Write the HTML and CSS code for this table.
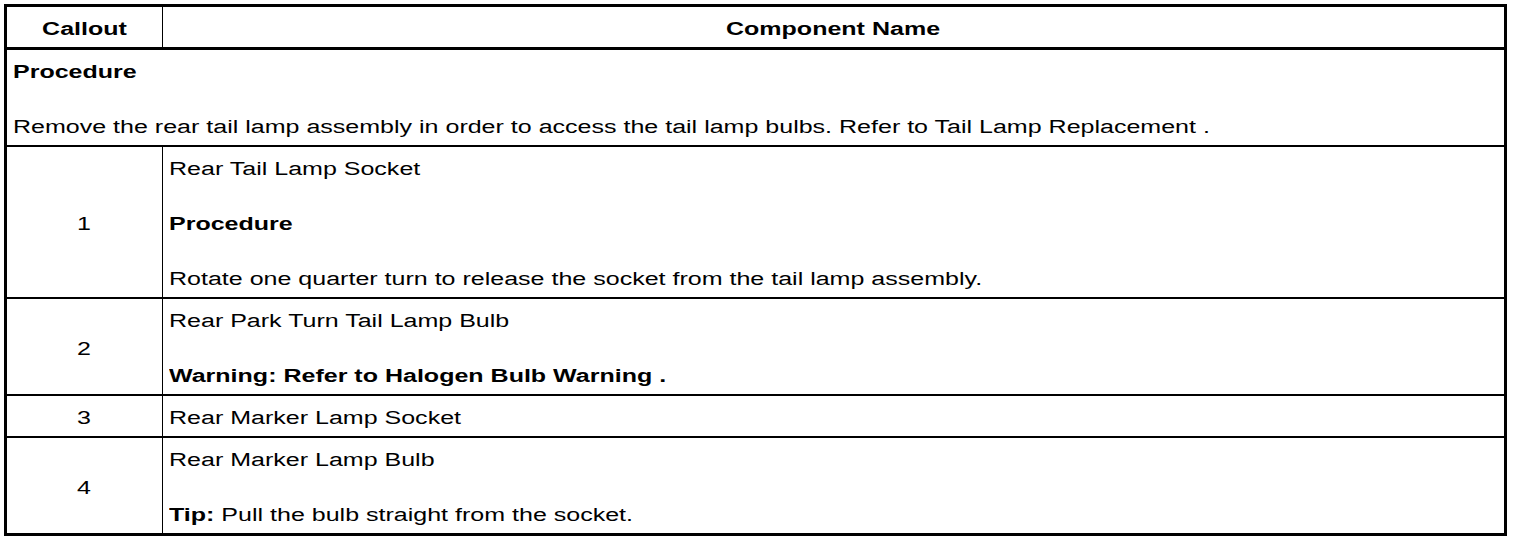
FILE: index.html
```html
<!DOCTYPE html>
<html lang="en">
<head>
<meta charset="utf-8">
<title>Callout table</title>
<link rel="stylesheet" href="styles.css">
</head>
<body>
<table class="parts">
  <thead>
    <tr>
      <th class="col-callout"><span class="sx c">Callout</span></th>
      <th class="col-name"><span class="sx c">Component Name</span></th>
    </tr>
  </thead>
  <tbody>
    <tr class="first">
      <td colspan="2" class="name">
        <p><span class="sx"><b>Procedure</b></span></p>
        <p><span class="sx">Remove the rear tail lamp assembly in order to access the tail lamp bulbs. Refer to Tail Lamp Replacement .</span></p>
      </td>
    </tr>
    <tr>
      <td class="num"><span class="sx c">1</span></td>
      <td class="name">
        <p><span class="sx">Rear Tail Lamp Socket</span></p>
        <p><span class="sx"><b>Procedure</b></span></p>
        <p><span class="sx">Rotate one quarter turn to release the socket from the tail lamp assembly.</span></p>
      </td>
    </tr>
    <tr>
      <td class="num"><span class="sx c">2</span></td>
      <td class="name">
        <p><span class="sx">Rear Park Turn Tail Lamp Bulb</span></p>
        <p><span class="sx"><b>Warning: Refer to Halogen Bulb Warning .</b></span></p>
      </td>
    </tr>
    <tr>
      <td class="num"><span class="sx c">3</span></td>
      <td class="name">
        <p><span class="sx">Rear Marker Lamp Socket</span></p>
      </td>
    </tr>
    <tr>
      <td class="num"><span class="sx c">4</span></td>
      <td class="name">
        <p><span class="sx">Rear Marker Lamp Bulb</span></p>
        <p><span class="sx"><b>Tip:</b> Pull the bulb straight from the socket.</span></p>
      </td>
    </tr>
  </tbody>
</table>
</body>
</html>
```
FILE: styles.css
```css
html, body {
  margin: 0;
  padding: 0;
  background: #ffffff;
}

body {
  font-family: "Liberation Sans", Arial, sans-serif;
  font-size: 18px;
  line-height: 22px;
  color: #000000;
}

.parts {
  margin: 4px;
  width: 1503px;
  border: 3px solid #000;
  border-collapse: separate;
  border-spacing: 0;
  table-layout: fixed;
}

.parts th,
.parts td {
  box-sizing: border-box;
  padding: 11px 6px 7px 6px;
  vertical-align: middle;
  text-align: left;
}

.parts th {
  font-weight: bold;
  text-align: center;
  border-bottom: 3px solid #000;
}

.parts th.col-callout {
  width: 156px;
  border-right: 1px solid #000;
}

.parts tbody tr + tr td {
  border-top: 2px solid #000;
}

.parts td.num {
  text-align: center;
  border-right: 1px solid #000;
}

.name p {
  margin: 0;
}

.name p + p {
  margin-top: 33px;
}

.sx {
  display: inline-block;
  white-space: nowrap;
  transform: scaleX(1.39);
  transform-origin: left center;
}

.sx.c {
  transform-origin: center center;
}

b {
  font-weight: bold;
}
```
